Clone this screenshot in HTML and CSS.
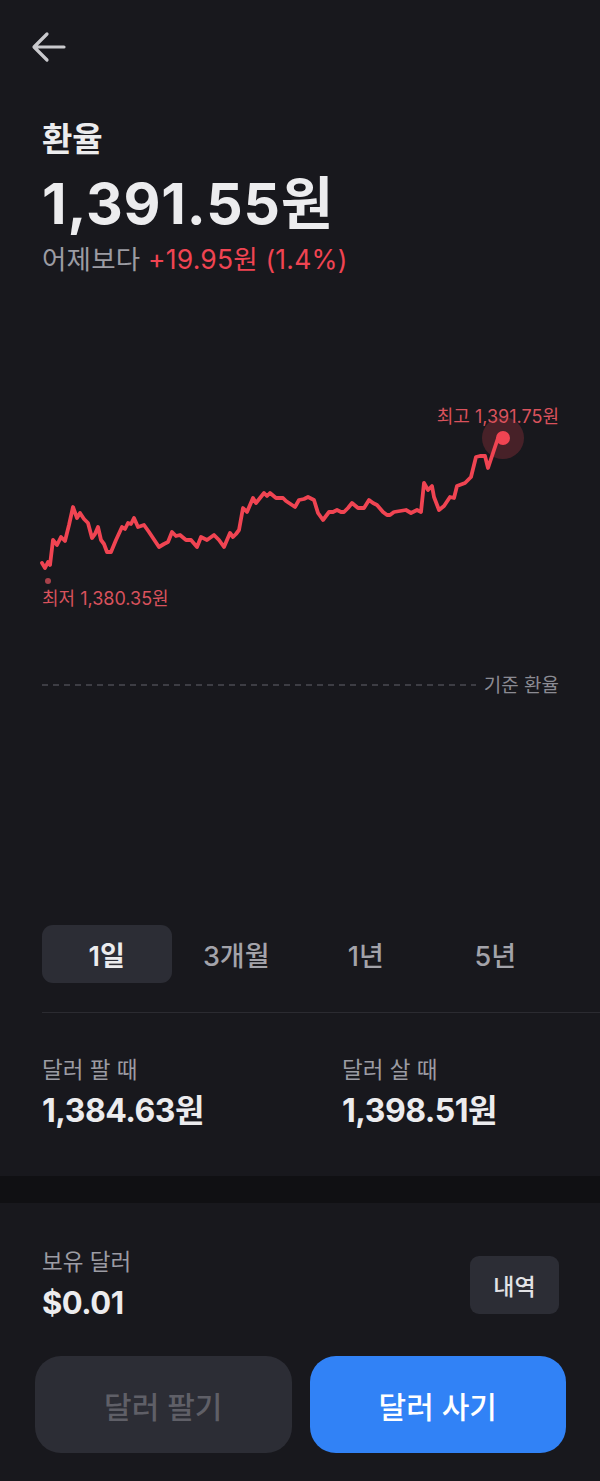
FILE: index.html
```html
<!DOCTYPE html>
<html lang="ko">
<head>
<meta charset="utf-8">
<title>환율</title>
<link rel="stylesheet" href="styles.css">
</head>
<body>
<div class="page">
  <header class="topbar">
    <svg class="back" width="36" height="32" viewBox="0 0 36 32" aria-hidden="true">
      <path d="M33 16 H4 M16 3 L3 16 L16 29" fill="none" stroke="#c9c9cd" stroke-width="3.2" stroke-linecap="round" stroke-linejoin="round"/>
    </svg>
  </header>

  <section class="summary">
    <h1 class="title">환율</h1>
    <div class="rate">1,391.55원</div>
    <div class="change"><span class="muted">어제보다</span> <span class="up">+19.95원 (1.4%)</span></div>
  </section>

  <svg class="chart" width="600" height="600" viewBox="0 300 600 600">
    <line x1="42" y1="685" x2="476" y2="685" stroke="#4a4a52" stroke-width="1.6" stroke-dasharray="6 5"/>
    <text x="559" y="692" text-anchor="end" class="base-label">기준 환율</text>
    <path d="M42,563 L45,568 L48,562 L50,565 L53,540 L57,545 L61,537 L65,541 L69,525 L73,507 L77,518 L80,513 L84,519 L88,523 L92,538 L95,534 L98,527 L101,540 L104,544 L107,552 L111,552 L116,540 L122,527 L125,529 L128,523 L131,524 L134,518 L138,527 L144,525 L149,532 L153,538 L159,547 L164,544 L168,542 L172,532 L176,536 L180,535 L186,540 L191,540 L197,547 L201,537 L207,540 L214,535 L219,540 L224,547 L230,533 L233,537 L236,534 L239,530 L243,508 L247,512 L253,498 L256,503 L260,498 L264,493 L267,496 L270,493 L276,498 L283,498 L286,501 L289,503 L295,507 L299,500 L304,499 L308,497 L314,500 L318,513 L323,520 L329,512 L333,512 L337,510 L341,512 L344,512 L348,508 L352,503 L358,508 L364,508 L369,500 L373,503 L377,505 L383,512 L387,515 L390,515 L394,512 L400,511 L406,510 L411,513 L417,510 L421,512 L424,483 L428,490 L432,486 L434,497 L439,510 L444,506 L450,497 L454,498 L457,486 L465,483 L471,477 L476,457 L480,456 L485,456 L488,468 L494,450 L498,438 L503,437" fill="none" stroke="#f04452" stroke-width="3.8" stroke-linejoin="round" stroke-linecap="round"/>
    <circle cx="48" cy="581" r="3" fill="#a8414a"/>
    <text x="42" y="605" class="extreme-label">최저 1,380.35원</text>
    <circle cx="503" cy="438" r="21" fill="#f04452" fill-opacity="0.22"/>
    <circle cx="503" cy="438" r="7" fill="#f04452"/>
    <text x="559" y="423" text-anchor="end" class="extreme-label">최고 1,391.75원</text>
  </svg>

  <nav class="tabs">
    <button class="tab active">1일</button>
    <button class="tab">3개월</button>
    <button class="tab">1년</button>
    <button class="tab">5년</button>
  </nav>

  <div class="divider"></div>

  <section class="quotes">
    <div class="quote">
      <div class="q-label">달러 팔 때</div>
      <div class="q-value">1,384.63원</div>
    </div>
    <div class="quote">
      <div class="q-label">달러 살 때</div>
      <div class="q-value">1,398.51원</div>
    </div>
  </section>

  <div class="gap"></div>

  <section class="holding">
    <div class="hold-info">
      <div class="q-label">보유 달러</div>
      <div class="hold-value">$0.01</div>
    </div>
    <button class="history">내역</button>
  </section>

  <div class="actions">
    <button class="btn sell">달러 팔기</button>
    <button class="btn buy">달러 사기</button>
  </div>
</div>
</body>
</html>
```

FILE: styles.css
```css
* { box-sizing: border-box; }
html, body {
  margin: 0;
  padding: 0;
  background: #18181d;
}
body {
  font-family: "Inter", "Noto Sans CJK KR", sans-serif;
  color: #ececee;
  width: 600px;
  height: 1481px;
  overflow: hidden;
}
.page {
  display: flex;
  flex-direction: column;
}
.topbar {
  height: 117px;
  padding: 31px 0 0 31px;
}
.back { display: block; }

.summary {
  padding-left: 42px;
  display: flex;
  flex-direction: column;
}
.title {
  margin: 0;
  font-size: 33px;
  line-height: 44px;
  font-weight: 700;
  color: #ececee;
}
.rate {
  margin-top: 8px;
  font-size: 57px;
  line-height: 70px;
  font-weight: 700;
  letter-spacing: 0.8px;
  color: #ececee;
}
.change {
  margin-top: 3px;
  font-size: 26.5px;
  line-height: 34px;
  font-weight: 400;
  letter-spacing: 0.2px;
}
.muted { color: #9c9ca3; }
.up { color: #f04452; }

.chart {
  display: block;
  margin-top: 24px;
}
.base-label {
  font-family: "Noto Sans CJK KR", sans-serif;
  font-size: 19px;
  fill: #8b8b93;
}
.extreme-label {
  font-family: "Inter", "Noto Sans CJK KR", sans-serif;
  font-size: 18px;
  fill: #d9525c;
}

.tabs {
  margin: 25px 40px 0 42px;
  display: grid;
  grid-template-columns: repeat(4, 1fr);
}
.tab {
  height: 58px;
  border: 0;
  border-radius: 11px;
  background: transparent;
  font-family: inherit;
  font-size: 27px;
  font-weight: 500;
  color: #a3a3aa;
  padding: 0;
}
.tab.active {
  background: #2c2d35;
  color: #ececee;
  font-weight: 600;
}

.divider {
  margin: 29px 0 0 42px;
  border-top: 1px solid #2b2b31;
}

.quotes {
  display: grid;
  grid-template-columns: 300px 1fr;
  padding: 41px 0 0 42px;
  height: 163px;
}
.q-label {
  font-size: 22.5px;
  line-height: 32px;
  color: #9c9ca3;
}
.q-value {
  margin-top: 5px;
  font-size: 32px;
  line-height: 40px;
  font-weight: 700;
  letter-spacing: -0.5px;
  color: #ececee;
}

.gap {
  height: 27px;
  background: #101013;
}

.holding {
  display: flex;
  justify-content: space-between;
  align-items: flex-start;
  padding: 43px 41px 0 42px;
}
.hold-value {
  margin-top: 6px;
  font-size: 31px;
  line-height: 38px;
  font-weight: 700;
  letter-spacing: -0.5px;
  color: #ececee;
}
.history {
  margin-top: 10px;
  width: 89px;
  height: 58px;
  border: 0;
  border-radius: 9px;
  background: #2c2d35;
  color: #e2e2e5;
  font-family: inherit;
  font-size: 23px;
  font-weight: 500;
  padding: 0;
}

.actions {
  display: grid;
  grid-template-columns: 1fr 1fr;
  gap: 18px;
  padding: 34px 34px 0 35px;
}
.btn {
  height: 97px;
  border: 0;
  border-radius: 26px;
  font-family: inherit;
  font-size: 30px;
  font-weight: 500;
  padding: 0;
}
.sell {
  background: #2c2d35;
  color: #5f5f67;
}
.buy {
  background: #3182f6;
  color: #ffffff;
}
```
